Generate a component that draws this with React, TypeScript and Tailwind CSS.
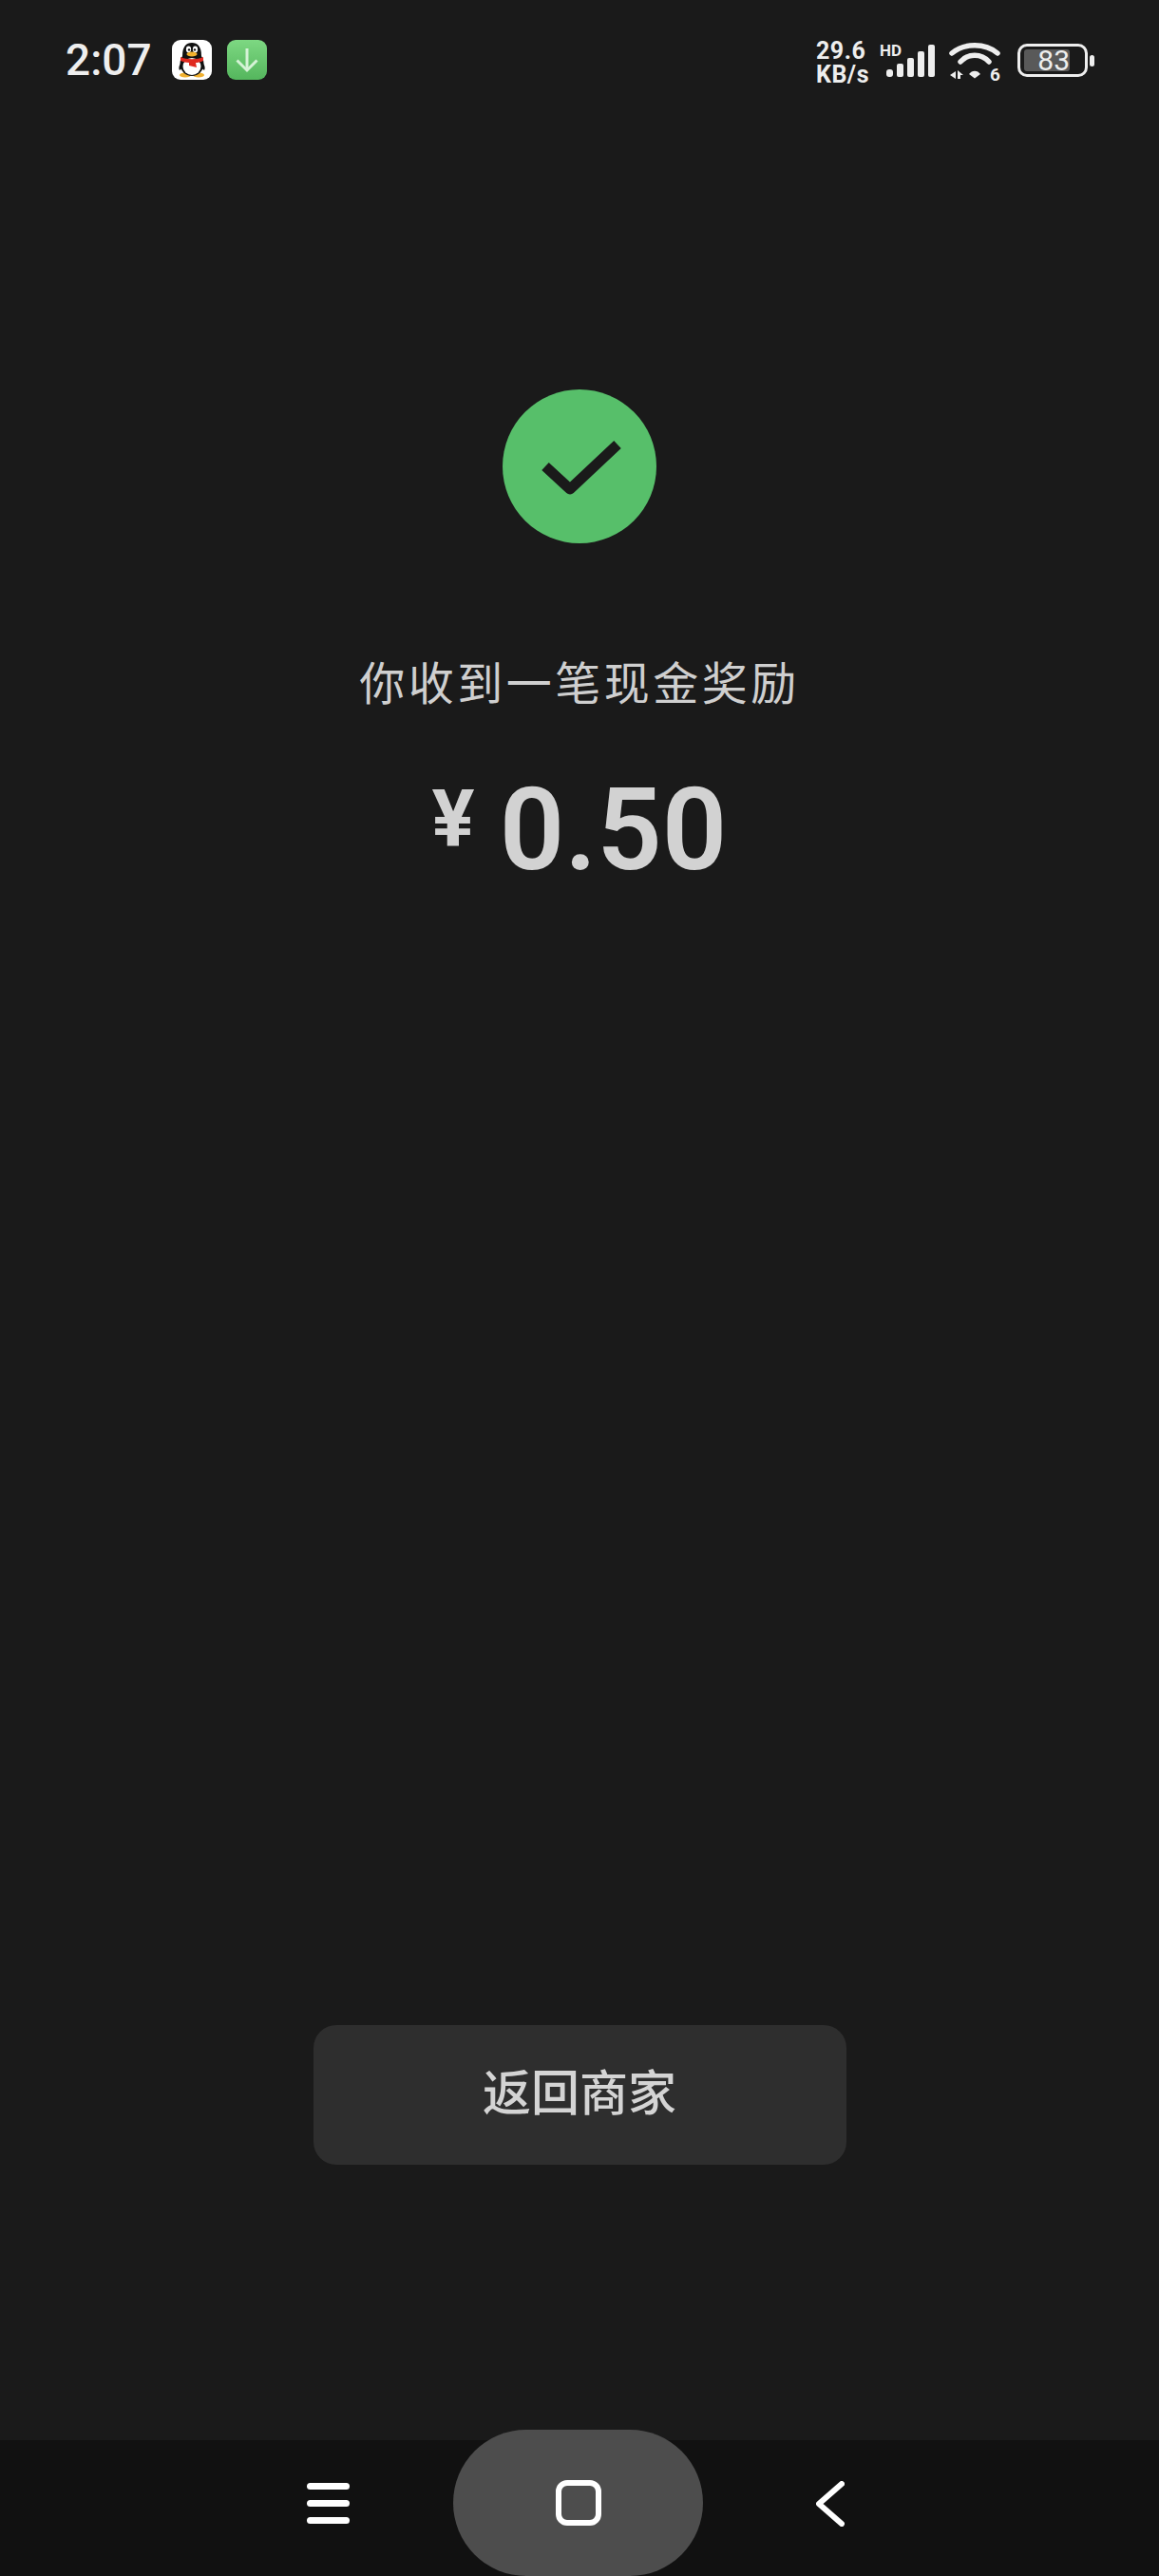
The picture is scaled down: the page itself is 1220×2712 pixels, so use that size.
const SANS = "font-['Roboto','Noto_Sans_CJK_SC',sans-serif]";

function QQIcon() {
  return (
    <div className="flex h-[42px] w-[42px] items-center justify-center rounded-[9px] bg-white">
      <svg width="38" height="40" viewBox="0 0 38 40">
        <ellipse cx="12" cy="36" rx="6" ry="2.5" fill="#f0b030" />
        <ellipse cx="26" cy="36" rx="6" ry="2.5" fill="#f0b030" />
        <path d="M7 24 C5 27 5 29 6 31 L10 28 Z" fill="#111" />
        <path d="M31 24 C33 27 33 29 32 31 L28 28 Z" fill="#111" />
        <ellipse cx="19" cy="24" rx="12.5" ry="13" fill="#111" />
        <ellipse cx="19" cy="27" rx="9.5" ry="9" fill="#fff" />
        <path d="M9 16 C9 6 13 2 19 2 C25 2 29 6 29 16 Z" fill="#111" />
        <ellipse cx="15.5" cy="9" rx="2.6" ry="3.4" fill="#fff" />
        <ellipse cx="22.5" cy="9" rx="2.6" ry="3.4" fill="#fff" />
        <circle cx="16" cy="9.4" r="1.2" fill="#111" />
        <circle cx="22" cy="9.4" r="1.2" fill="#111" />
        <ellipse cx="19" cy="14" rx="5.5" ry="2.4" fill="#f2b02c" />
        <path d="M7 17 C13 20 25 20 31 17 L31 21 C26 23 24 23 23 23 L24 28 L16 26 L16 23 C13 23 10 22 7 21 Z" fill="#e02a20" />
      </svg>
    </div>
  );
}

function DownloadIcon() {
  return (
    <div className="flex h-[42px] w-[42px] items-center justify-center rounded-[9px] bg-linear-to-b from-[#7dd882] to-[#54b65d]">
      <svg width="26" height="28" viewBox="0 0 26 28" fill="none" stroke="#d5f3d6" strokeWidth="3">
        <path d="M13 2 V25" />
        <path d="M2.5 14.5 L13 25 L23.5 14.5" />
      </svg>
    </div>
  );
}

function SignalIcon() {
  return (
    <svg width="52" height="36" viewBox="0 0 52 36" fill="#eeeeee">
      <rect x="0" y="27" width="7" height="8" rx="3" />
      <rect x="11" y="21" width="7" height="14" rx="2" />
      <rect x="22" y="15" width="7" height="20" rx="2" />
      <rect x="33" y="8" width="7" height="27" rx="2" />
      <rect x="44" y="1" width="7" height="34" rx="2" />
    </svg>
  );
}

function WifiIcon() {
  return (
    <svg width="54" height="48" viewBox="0 0 54 48" fill="none">
      <path d="M3 12 C16 1 38 1 51 12" stroke="#eeeeee" strokeWidth="5.5" strokeLinecap="round" />
      <path d="M12 21 C20 12 34 12 42 21" stroke="#eeeeee" strokeWidth="5.5" strokeLinecap="round" />
      <path d="M21 34 C24 29.5 30 29.5 33 34 L27 38.5 Z" fill="#eeeeee" />
      <path d="M1 35 L7 31 V39 Z" fill="#eeeeee" />
      <path d="M9 30 L15 35 H12 V39 H9 Z" fill="#eeeeee" />
      <text x="43" y="41" fontSize="19" fontWeight="700" fill="#eeeeee" fontFamily="Roboto, sans-serif">6</text>
    </svg>
  );
}

function Battery() {
  return (
    <div className="flex items-center gap-[2px]">
      <div className="flex h-[35px] w-[74px] items-center rounded-[10px] border-[3px] border-[#eeeeee] px-[4px]">
        <div className="flex h-[23px] w-[48px] items-center justify-end rounded-[3px] bg-[#595959]">
          <span className="text-[30px] leading-none text-[#eeeeee]">83</span>
        </div>
      </div>
      <div className="h-[12px] w-[5px] rounded-full bg-[#eeeeee]" />
    </div>
  );
}

function StatusBar() {
  return (
    <div className="flex h-[112px] items-start justify-between pl-[69px] pr-[68px] pt-[42px]">
      <div className="flex items-center">
        <span className="w-[112px] text-[46px] font-medium leading-[42px] text-[#eeeeee]">2:07</span>
        <QQIcon />
        <div className="ml-[16px]">
          <DownloadIcon />
        </div>
      </div>
      <div className="flex items-start">
        <div className="-mt-[1px] flex w-[67px] flex-col text-[25px] font-bold leading-[25px] tracking-[0.5px] text-[#eeeeee]">
          <span>29.6</span>
          <span>KB/s</span>
        </div>
        <div className="mt-[3px] flex w-[73px] flex-col">
          <span className="-mb-[15px] text-[17px] font-bold leading-[16px] text-[#eeeeee]">HD</span>
          <div className="pl-[7px]">
            <SignalIcon />
          </div>
        </div>
        <div className="mt-[2px]">
          <WifiIcon />
        </div>
        <div className="ml-[18px] mt-[4px]">
          <Battery />
        </div>
      </div>
    </div>
  );
}

function NavBar() {
  return (
    <div className="flex h-[143px] items-start bg-[#111111] pl-[323px]">
      <div className="w-[154px] pt-[45px]">
        <div className="flex w-[45px] flex-col gap-[11px]">
          <div className="h-[7px] rounded-full bg-white" />
          <div className="h-[7px] rounded-full bg-white" />
          <div className="h-[7px] rounded-full bg-white" />
        </div>
      </div>
      <div className="-mt-[11px] flex h-[154px] w-[263px] items-center justify-center rounded-[77px] bg-[#4d4d4d]">
        <div className="h-[48px] w-[48px] rounded-[12px] border-[6px] border-white" />
      </div>
      <div className="flex w-[149px] justify-end pt-[43px]">
        <svg width="30" height="48" viewBox="0 0 30 48" fill="none" stroke="#ffffff" strokeWidth="6" strokeLinecap="round" strokeLinejoin="round">
          <path d="M27 3 L3 24 L27 45" />
        </svg>
      </div>
    </div>
  );
}

export default function App() {
  return (
    <div className={`flex h-[2712px] w-[1220px] flex-col overflow-hidden bg-[#1a1a1a] ${SANS}`}>
      <StatusBar />
      <main className="flex flex-1 flex-col items-center pt-[298px]">
        <div className="flex h-[162px] w-[162px] items-center justify-center rounded-full bg-[#57bf6a]">
          <svg width="88" height="64" viewBox="0 0 88 64" fill="none" stroke="#1a1a1a" strokeWidth="11" strokeLinejoin="round">
            <path d="M8 32 L34 56 L84 9" />
          </svg>
        </div>
        <p className="mt-[119px] text-[48px] leading-[60px] tracking-[3.5px] text-[#cfcfcf]">你收到一笔现金奖励</p>
        <div className="mt-[68px] flex items-start text-[#d2d2d2]">
          <span className="mr-[26px] text-[84px] font-bold leading-[88px]">¥</span>
          <span className="text-[120px] font-semibold leading-[110px]">0.50</span>
        </div>
        <div className="flex-1" />
        <button className="mb-[290px] flex h-[147px] w-[561px] items-center justify-center rounded-[24px] bg-[#2e2e2e] text-[51px] font-medium text-[#d4d4d4]">
          返回商家
        </button>
      </main>
      <NavBar />
    </div>
  );
}
